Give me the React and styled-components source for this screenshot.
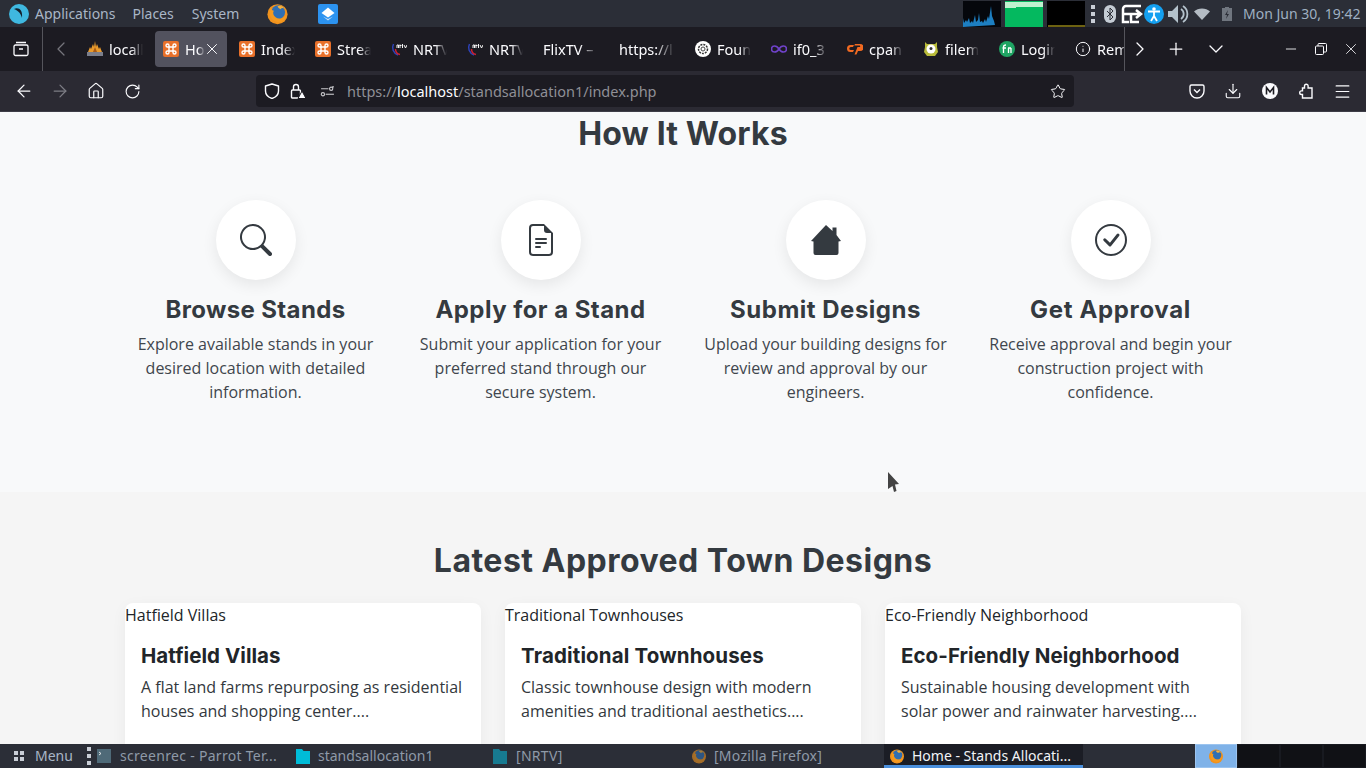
import React from 'react';
import styled, { createGlobalStyle } from 'styled-components';
import { ChevronLeft, ChevronRight, ChevronDown, Plus, Minus, X, ArrowLeft, ArrowRight, Home, RotateCw, Star, Download, Menu as MenuIcon, Info } from 'lucide-react';
import { BsSearch, BsFileEarmarkText, BsCheckCircle } from 'react-icons/bs';

const Global = createGlobalStyle`
  html, body { margin: 0; padding: 0; height: 768px; overflow: hidden; }
  * { box-sizing: border-box; }
  #root { height: 768px; }
`;

const Screen = styled.div`
  position: relative;
  width: 1366px; height: 768px;
  display: flex; flex-direction: column;
  overflow: hidden;
  font-family: "Noto Sans", "Open Sans", sans-serif;
`;

/* top system panel */
const TopPanel = styled.div`
  height: 27px; flex: none;
  background: #2b2e37;
  display: flex; align-items: center;
  padding-left: 9px;
  color: #a9b6c6;
  font-size: 14px;
`;
const PanelMenu = styled.span`
  margin-left: ${p => p.$gap}px;
`;
const PanelIcon = styled.span`
  display: inline-flex;
  margin-left: ${p => p.$gap}px;
`;
const Tray = styled.div`
  margin-left: auto;
  display: flex; align-items: center;
  height: 27px;
`;
const Graph = styled.svg`
  display: block;
  width: 38px; height: 26px;
  margin-right: ${p => p.$mr ?? 4}px;
`;
const TrayIcon = styled.span`
  display: inline-flex; align-items: center; justify-content: center;
  width: ${p => p.$w}px;
  margin-left: ${p => p.$ml ?? 0}px;
`;
const Clock = styled.span`
  margin-left: 11px;
  width: 123px;
  white-space: nowrap;
  color: #9fb0c2;
`;

/* tab strip */
const TabBar = styled.div`
  height: 44px; flex: none;
  background: #1c1b22;
  display: flex; align-items: center;
  color: #fbfbfe;
`;
const ViewButton = styled.div`
  flex: none;
  width: 43px; height: 44px;
  display: flex; align-items: center; justify-content: center;
  border-right: 1px solid #55555c;
`;
const ScrollButton = styled.div`
  flex: none;
  width: 36px; height: 44px;
  display: flex; align-items: center; justify-content: center;
  color: ${p => p.$dim ? '#75757c' : '#fbfbfe'};
`;
const Tabs = styled.div`
  flex: none;
  width: 1046px; height: 44px;
  display: flex; align-items: center;
  border-right: 1px solid #55555c;
  overflow: hidden;
`;
const Tab = styled.div`
  flex: none;
  width: 72px; height: 36px;
  margin-right: 4px;
  padding: 0 8px;
  border-radius: 4px;
  display: flex; align-items: center;
  gap: 6px;
  background: ${p => p.$active ? '#52525e' : 'transparent'};
`;
const TabLabel = styled.span`
  flex: 1; min-width: 0;
  white-space: nowrap;
  font-size: 14.5px;
  line-height: 20px;
  -webkit-mask-image: linear-gradient(to right, #000 65%, transparent 100%);
  mask-image: linear-gradient(to right, #000 65%, transparent 100%);
`;
const TabClose = styled.span`
  flex: none;
  display: inline-flex;
  margin-left: -6px;
`;
const Fav = styled.svg`
  flex: none; width: 16px; height: 16px; display: block;
`;
const BarButton = styled.div`
  flex: none;
  width: ${p => p.$w}px; height: 44px;
  display: flex; align-items: center; justify-content: center;
`;
const Spacer = styled.div`
  width: ${p => p.$w}px; flex: none;
`;

/* nav toolbar */
const NavBar = styled.div`
  height: 41px; flex: none;
  background: #2b2a33;
  border-bottom: 1px solid #3e3d47;
  display: flex; align-items: center;
  color: #fbfbfe;
`;
const NavButton = styled.div`
  flex: none;
  width: ${p => p.$w ?? 36}px; height: 32px;
  display: flex; align-items: center; justify-content: center;
  color: ${p => p.$dim ? '#7d7d85' : '#fbfbfe'};
`;
const UrlBar = styled.div`
  flex: none;
  width: 818px; height: 32px;
  background: #1c1b22;
  border-radius: 4px;
  display: flex; align-items: center;
  margin-right: 105px;
`;
const UrlIcon = styled.span`
  flex: none;
  display: inline-flex; align-items: center; justify-content: center;
  width: ${p => p.$w}px;
  margin-left: ${p => p.$ml ?? 0}px;
  margin-right: ${p => p.$mr ?? 0}px;
`;
const UrlText = styled.span`
  flex: 1;
  margin-left: 12px;
  font-size: 14.5px;
  color: #8f8f96;
  white-space: nowrap;
  b { font-weight: 400; color: #fbfbfe; }
`;

/* web page */
const Page = styled.main`
  flex: 1; min-height: 0;
  overflow: hidden;
  font-family: "Open Sans", sans-serif;
  color: #212529;
`;
const Steps = styled.section`
  height: 380px;
  padding-top: 1px;
  background: #f8f9fa;
`;
const Heading = styled.h2`
  margin: 0;
  text-align: center;
  font-family: Inter, sans-serif;
  font-weight: 650;
  font-size: 32px;
  line-height: 42px;
  letter-spacing: ${p => p.$track ?? 0}px;
  color: #343a40;
`;
const StepGrid = styled.div`
  width: 1140px;
  margin: 0 auto;
  padding-top: 45px;
  display: grid;
  grid-template-columns: repeat(4, 285px);
`;
const Step = styled.div`
  display: flex; flex-direction: column; align-items: center;
  padding: 0 16px;
  text-align: center;
`;
const Circle = styled.div`
  width: 80px; height: 80px;
  border-radius: 50%;
  background: #fff;
  box-shadow: 0 5px 15px rgba(0,0,0,.08);
  display: flex; align-items: center; justify-content: center;
  color: #343a40;
  font-size: 32px;
`;
const StepTitle = styled.h3`
  margin: 14px 0 0;
  white-space: nowrap;
  font-family: Inter, sans-serif;
  font-weight: 650;
  font-size: 24px;
  line-height: 32px;
  letter-spacing: ${p => p.$track ?? 0}px;
  color: #343a40;
`;
const StepText = styled.p`
  margin: 6px 0 0;
  font-size: 16px;
  line-height: 24px;
  color: #40464d;
`;
const Latest = styled.section`
  height: 252px;
  background: #f5f5f5;
  padding-top: 48px;
`;
const CardRow = styled.div`
  width: 1116px;
  margin: 21px auto 0;
  display: grid;
  grid-template-columns: repeat(3, 356px);
  gap: 24px;
`;
const Card = styled.article`
  height: 200px;
  background: #fff;
  border-radius: 8px;
  box-shadow: 0 4px 15px rgba(0,0,0,.05);
`;
const AltText = styled.div`
  height: 24px;
  font-size: 16px;
  line-height: 24px;
`;
const CardBody = styled.div`
  padding: 15px 16px;
`;
const CardTitle = styled.h4`
  margin: 0;
  font-family: Inter, sans-serif;
  font-weight: 650;
  font-size: 20.5px;
  line-height: 28px;
  letter-spacing: ${p => p.$track ?? 0}px;
  color: #212529;
`;
const CardText = styled.p`
  margin: 5px 0 0;
  font-size: 16px;
  line-height: 24px;
  color: #33383d;
`;

/* bottom panel */
const TaskBar = styled.div`
  height: 24px; flex: none;
  background: #2b2e37;
  display: flex; align-items: stretch;
  color: #8f9aa8;
  font-size: 14px;
`;
const StartMenu = styled.div`
  width: 85px;
  flex: none;
  display: flex; align-items: center;
  gap: 11px;
  padding: 0 0 1px 14px;
  color: #a9b6c6;
`;
const Handle = styled.svg`
  flex: none; width: 4px; height: 18px; align-self: center;
  margin-right: 6px;
`;
const Task = styled.div`
  flex: none;
  width: ${p => p.$w}px;
  display: flex; align-items: center;
  gap: ${p => p.$gap ?? 8}px;
  padding-left: ${p => p.$pl ?? 0}px;
  padding-bottom: 1px;
  white-space: nowrap;
  letter-spacing: ${p => p.$track ?? 0}px;
  ${p => p.$active && `
    background: #1b1d25;
    color: #f2f4f7;
    border-bottom: 3px solid #4a8fdc;
    padding-top: 2px;
    padding-bottom: 0;
  `}
`;
const DimIcon = styled.span`
  display: inline-flex;
  opacity: .6;
`;
const Workspaces = styled.div`
  margin-left: auto;
  display: flex;
`;
const Workspace = styled.div`
  width: ${p => p.$w}px;
  background: ${p => p.$active ? '#7fb2e8' : '#101115'};
  border: 1px solid ${p => p.$active ? '#9cc4ef' : '#181a20'};
  display: flex; align-items: center; justify-content: center;
`;
const Cursor = styled.svg`
  position: absolute;
  left: 887px; top: 472px;
  width: 13px; height: 21px;
`;

const Xampp = () => (
  <Fav viewBox="0 0 16 16">
    <rect width="16" height="16" rx="2" fill="#e8702a" />
    <path d="M6 6V4.500a1.500 1.500 0 1 0-1.500 1.500h7A1.500 1.500 0 1 0 10 4.500v7a1.500 1.500 0 1 0 1.500-1.500h-7A1.500 1.500 0 1 0 6 11.500z" stroke="#fff" strokeWidth="1.400" fill="none" />
  </Fav>
);
const Pma = () => (
  <Fav viewBox="0 0 16 16">
    <path d="M1 11L3 6l1 2 2-5 1 3 1-6 1 6 1-3 2 5 1-2 2 5z" fill="#e99a2c" />
    <path d="M6 11l2-5 2 5z" fill="#a85a16" />
    <rect x="0" y="11" width="16" height="4" fill="#7b7f8c" />
  </Fav>
);
const Nrtv = () => (
  <Fav viewBox="0 0 16 16">
    <path d="M2.500 3C.5 7 2 12 7 14" stroke="#2e42b8" strokeWidth="1.500" fill="none" />
    <path d="M4.500 8c0 3 2 5 4.500 5.500" stroke="#cc2030" strokeWidth="1.500" fill="none" />
    <rect x="5" y="2" width="11" height="6" rx="1" fill="#1c1b22" />
    <path d="M6 7V4h1.500v3M9 7V3.500M8.500 4.500h2M11.500 7V3M13 4l1.500 3L16 4" stroke="#f4f4f4" strokeWidth="1" fill="none" />
  </Fav>
);
const Found = () => (
  <Fav viewBox="0 0 16 16">
    <circle cx="8" cy="8" r="8" fill="#fff" />
    <circle cx="8" cy="8" r="4.500" fill="none" stroke="#333" strokeWidth="1.500" strokeDasharray="2 1" />
    <circle cx="8" cy="8" r="2" fill="none" stroke="#444" strokeWidth="1" />
  </Fav>
);
const Infinity8 = () => (
  <Fav viewBox="0 0 16 16">
    <path d="M8 8C6.500 5.500 5 5 3.500 5a3 3 0 0 0 0 6C5 11 6.500 10.500 8 8c1.500-2.500 3-3 4.500-3a3 3 0 0 1 0 6c-1.500 0-3-.5-4.500-3z" fill="none" stroke="#6f42c9" strokeWidth="1.600" />
  </Fav>
);
const Cpanel = () => (
  <Fav viewBox="0 0 16 16">
    <path d="M7 4H3.500a3.500 3.500 0 0 0 0 7H6l1-2H3.800a1.500 1.500 0 0 1 0-3H6z" fill="#f26a21" />
    <path d="M8 3h5a3 3 0 0 1 0 7h-2l-1.500 3.500H7.500L10.500 6h2.300a1 1 0 0 0 0-1.500H7.200z" fill="#f26a21" />
  </Fav>
);
const Filem = () => (
  <Fav viewBox="0 0 16 16">
    <path d="M2 1l2 2h8l2-2v5l1 5-3 4H4l-3-4 1-5z" fill="#b8bb3a" />
    <circle cx="8" cy="8" r="4.500" fill="#fff" />
    <circle cx="8" cy="7.500" r="1.500" fill="#333" />
  </Fav>
);
const Login = () => (
  <Fav viewBox="0 0 16 16">
    <circle cx="8" cy="8" r="8" fill="#1fa463" />
    <path d="M4.500 12V6c0-1.500 1-2 2.500-2M3.500 7H7M9.500 7v5M12 7v5M9 7h3" stroke="#fff" strokeWidth="1.300" fill="none" />
  </Fav>
);
const FoxIcon = ({ size = 16 }) => (
  <svg viewBox="0 0 16 16" width={size} height={size} style={{ display: 'block' }}>
    <circle cx="8" cy="8.500" r="7" fill="#f0921e" />
    <circle cx="8.500" cy="7" r="4.800" fill="#2f6fb4" />
    <path d="M3 4c-1 4 0 9 5 10 3 .5 6-2 6-5-1 2-3 3-5 2.500C6 11 4 8 5.500 6 4.500 6 3.500 5 3 4z" fill="#f59a1f" />
    <path d="M8 3c2-1 4 0 5 2-1-1-2-1-3 0-1-.5-1.500-1-2-2z" fill="#f8b13a" />
  </svg>
);
const HouseIcon = () => (
  <svg viewBox="0 0 30 30" width="30" height="30" fill="#343a40">
    <path d="M15 0l6.500 6V2.500h4V10l4.500 6-2.500.5V28a2 2 0 0 1-2 2h-21a2 2 0 0 1-2-2V16.500L0 16z" />
  </svg>
);
const Dots = () => (
  <Handle viewBox="0 0 4 18">
    <rect y="0" width="4" height="4" fill="#c9ced6" />
    <rect y="7" width="4" height="4" fill="#c9ced6" />
    <rect y="14" width="4" height="4" fill="#c9ced6" />
  </Handle>
);
const FolderIcon = ({ color }) => (
  <svg viewBox="0 0 14 16" width="14" height="16" style={{ display: 'block', flex: 'none' }}>
    <path d="M0 1h6l1.500 2H14v13H0z" fill={color} />
  </svg>
);

const tabs = [
  { icon: <Pma />, label: 'localh' },
  { icon: <Xampp />, label: 'Ho', active: true },
  { icon: <Xampp />, label: 'Index' },
  { icon: <Xampp />, label: 'Strea' },
  { icon: <Nrtv />, label: 'NRTV' },
  { icon: <Nrtv />, label: 'NRTV' },
  { label: 'FlixTV –' },
  { label: 'https://l' },
  { icon: <Found />, label: 'Foun' },
  { icon: <Infinity8 />, label: 'if0_3' },
  { icon: <Cpanel />, label: 'cpane' },
  { icon: <Filem />, label: 'filem' },
  { icon: <Login />, label: 'Login' },
  { icon: <Info size={16} strokeWidth={1.500} />, label: 'Rem' },
];

const steps = [
  { icon: <BsSearch />, title: 'Browse Stands', track: 0.35, text: 'Explore available stands in your desired location with detailed information.' },
  { icon: <BsFileEarmarkText />, title: 'Apply for a Stand', track: 0.45, text: 'Submit your application for your preferred stand through our secure system.' },
  { icon: <HouseIcon />, title: 'Submit Designs', track: 0.5, text: 'Upload your building designs for review and approval by our engineers.' },
  { icon: <BsCheckCircle />, title: 'Get Approval', track: 0.65, text: 'Receive approval and begin your construction project with confidence.' },
];

const cards = [
  { title: 'Hatfield Villas', track: 0.05, text: 'A flat land farms repurposing as residential houses and shopping center....' },
  { title: 'Traditional Townhouses', track: 0.15, text: 'Classic townhouse design with modern amenities and traditional aesthetics....' },
  { title: 'Eco-Friendly Neighborhood', track: 0.05, text: 'Sustainable housing development with solar power and rainwater harvesting....' },
];

export default function App() {
  return (
    <Screen>
      <Global />
      <TopPanel>
        <svg viewBox="0 0 20 20" width="20" height="20">
          <circle cx="10" cy="10" r="10" fill="#3fb8e0" />
          <path d="M5 5c4-2 9 0 8 9-1-4-3-7-8-9z" fill="#14202c" />
        </svg>
        <PanelMenu $gap={6}>Applications</PanelMenu>
        <PanelMenu $gap={17}>Places</PanelMenu>
        <PanelMenu $gap={18}>System</PanelMenu>
        <PanelIcon $gap={27}><FoxIcon size={23} /></PanelIcon>
        <PanelIcon $gap={29}>
          <svg viewBox="0 0 20 20" width="20" height="20">
            <rect width="20" height="20" rx="2" fill="#2c93f0" />
            <path d="M10 3.500l6.500 5.500-6.500 4.500L3.500 9z" fill="#fff" />
            <path d="M5 12.500l5 4 5-4-5 2.500z" fill="#cfe2f5" />
          </svg>
        </PanelIcon>
        <Tray>
          <Graph viewBox="0 0 38 26">
            <rect width="38" height="26" fill="#05070c" />
            <path d="M0 26V17l1 5 2-3 1 2 2-4 1 5 2-2 1 2 2-8 1 7 2-2 1-7 1 9 2-1 1 2 2-4 1 3 2-6 1 3 2-13 1 10 2 5 1 4z" fill="#1d7fc2" />
          </Graph>
          <Graph viewBox="0 0 38 26">
            <rect width="38" height="26" fill="#04b95f" />
            <path d="M0 1h38v5H11v1H0z" fill="#bff2cf" />
          </Graph>
          <Graph viewBox="0 0 38 26" $mr={6}>
            <rect width="38" height="26" fill="#000" />
            <rect x="1" y="24.500" width="37" height="1" fill="#d9c322" />
          </Graph>
          <Dots />
          <TrayIcon $w={12} $ml={3}>
            <svg viewBox="0 0 12 18" width="12" height="18">
              <rect width="12" height="18" rx="6" fill="#c4ccd4" />
              <path d="M3 6l6 6-3 3V3l3 3-6 6" stroke="#2b2e37" strokeWidth="1" fill="none" />
            </svg>
          </TrayIcon>
          <TrayIcon $w={22} $ml={5}>
            <svg viewBox="0 0 22 22" width="22" height="22">
              <path d="M20 3H5a3 3 0 0 0-3 3v13h6M11 11h8M15 7l5 4-5 4M3 11h7v8h8" fill="none" stroke="#fff" strokeWidth="2.500" />
            </svg>
          </TrayIcon>
          <TrayIcon $w={20} $ml={1}>
            <svg viewBox="0 0 20 20" width="20" height="20">
              <circle cx="10" cy="10" r="10" fill="#14a0f0" />
              <circle cx="10" cy="5" r="1.800" fill="#fff" />
              <path d="M4 7.500h12M10 8v5M10 12l-3 5M10 12l3 5" stroke="#fff" strokeWidth="1.800" fill="none" />
            </svg>
          </TrayIcon>
          <TrayIcon $w={22} $ml={4}>
            <svg viewBox="0 0 22 20" width="24" height="22">
              <path d="M0 7h4l6-6v18l-6-6H0z" fill="#b4c2cc" />
              <path d="M13 5a6 6 0 0 1 0 10M15 2a9.500 9.500 0 0 1 0 16" stroke="#b4c2cc" strokeWidth="1.800" fill="none" />
            </svg>
          </TrayIcon>
          <TrayIcon $w={16} $ml={4}>
            <svg viewBox="0 0 16 12" width="16" height="12">
              <path d="M0 3.500C4-.5 12-.5 16 3.500L8 12z" fill="#b4bcc4" />
            </svg>
          </TrayIcon>
          <TrayIcon $w={10} $ml={12}>
            <svg viewBox="0 0 10 14" width="10" height="14">
              <path d="M3 0h4v1h3v13H0V1h3z" fill="#70767f" />
              <path d="M6 3L3 8h2l-1 4 3-5H5z" fill="#2b2e37" />
            </svg>
          </TrayIcon>
          <Clock>Mon Jun 30, 19:42</Clock>
        </Tray>
      </TopPanel>

      <TabBar>
        <ViewButton>
          <svg viewBox="0 0 16 16" width="16" height="16" fill="none" stroke="#fbfbfe" strokeWidth="1.300">
            <rect x="1" y="4" width="14" height="10.500" rx="1.500" />
            <path d="M3 1.500h10M6 8h4" />
          </svg>
        </ViewButton>
        <ScrollButton $dim><ChevronLeft size={24} strokeWidth={1.300} /></ScrollButton>
        <Tabs>
          {tabs.map((t, i) => (
            <Tab key={i} $active={t.active}>
              {t.icon}
              <TabLabel>{t.label}</TabLabel>
              {t.active && <TabClose><X size={18} strokeWidth={1.300} style={{ margin: '0 -2px' }} /></TabClose>}
            </Tab>
          ))}
        </Tabs>
        <BarButton $w={30}><ChevronRight size={24} strokeWidth={1.300} /></BarButton>
        <BarButton $w={42}><Plus size={20} strokeWidth={1.500} /></BarButton>
        <BarButton $w={38}><ChevronDown size={24} strokeWidth={1.300} /></BarButton>
        <Spacer $w={41} />
        <BarButton $w={30}><Minus size={16} strokeWidth={1.300} /></BarButton>
        <BarButton $w={30}>
          <svg viewBox="0 0 12 12" width="12" height="12" fill="none" stroke="#fbfbfe" strokeWidth="1">
            <rect x=".5" y="3" width="8" height="8.500" rx="1" />
            <path d="M3 3V1.500a1 1 0 0 1 1-1h6.500a1 1 0 0 1 1 1V8a1 1 0 0 1-1 1H9" />
          </svg>
        </BarButton>
        <BarButton $w={30}><X size={18} strokeWidth={1.100} /></BarButton>
      </TabBar>

      <NavBar>
        <Spacer $w={6} />
        <NavButton><ArrowLeft size={20} strokeWidth={1.500} /></NavButton>
        <NavButton $dim><ArrowRight size={20} strokeWidth={1.500} /></NavButton>
        <NavButton><Home size={18} strokeWidth={1.600} /></NavButton>
        <NavButton><RotateCw size={17} strokeWidth={1.600} /></NavButton>
        <Spacer $w={106} />
        <UrlBar>
          <UrlIcon $w={16} $ml={8}>
            <svg viewBox="0 0 16 16" width="16" height="16" fill="none" stroke="#fbfbfe" strokeWidth="1.400" strokeLinejoin="round">
              <path d="M8 1l6.500 2v5c0 4-3.500 6.500-6.500 7.500C5 14.500 1.500 12 1.500 8V3z" />
            </svg>
          </UrlIcon>
          <UrlIcon $w={16} $ml={10}>
            <svg viewBox="0 0 16 16" width="16" height="16" fill="none" stroke="#fbfbfe" strokeWidth="1.400">
              <rect x="1.500" y="7" width="9" height="8" rx="1" />
              <path d="M3.500 7V4a2.500 2.500 0 0 1 5 0v3" />
              <path d="M12 8l-4 7.500h8z" fill="#fbfbfe" stroke="#1c1b22" strokeWidth="1" />
            </svg>
          </UrlIcon>
          <UrlIcon $w={16} $ml={13}>
            <svg viewBox="0 0 16 12" width="15" height="11" fill="none" stroke="#c8c8cc" strokeWidth="1.200">
              <path d="M1 3h8M13 1h2" /><circle cx="12" cy="3" r="1.800" />
              <circle cx="3" cy="9" r="1.800" /><path d="M6 9h9" />
            </svg>
          </UrlIcon>
          <UrlText>https://<b>localhost</b>/standsallocation1/index.php</UrlText>
          <UrlIcon $w={16} $mr={8}><Star size={17} strokeWidth={1.500} /></UrlIcon>
        </UrlBar>
        <NavButton $w={36}>
          <svg viewBox="0 0 16 16" width="16" height="16" fill="none" stroke="#fbfbfe" strokeWidth="1.400">
            <path d="M2.500 2h11A1.500 1.500 0 0 1 15 3.500V8a7 7 0 0 1-14 0V3.500A1.500 1.500 0 0 1 2.500 2z" />
            <path d="M5 6.500L8 9.500l3-3" />
          </svg>
        </NavButton>
        <NavButton $w={36}><Download size={18} strokeWidth={1.500} /></NavButton>
        <NavButton $w={37}>
          <svg viewBox="0 0 16 16" width="16" height="16">
            <circle cx="8" cy="8" r="8" fill="#fbfbfe" />
            <path d="M4.500 11.500v-7L8 9l3.500-4.500v7" stroke="#1c1b22" strokeWidth="1.600" fill="none" />
          </svg>
        </NavButton>
        <NavButton $w={36}>
          <svg viewBox="0 0 16 16" width="16" height="16" fill="none" stroke="#fbfbfe" strokeWidth="1.400">
            <path d="M6.500 3a1.800 1.800 0 0 1 3.600 0V5H14v10H4.500v-3.500H3.500a1.800 1.800 0 0 1 0-3.600h1V5h2z" />
          </svg>
        </NavButton>
        <NavButton $w={36}><MenuIcon size={19} strokeWidth={1.500} /></NavButton>
      </NavBar>

      <Page>
        <Steps>
          <Heading $track={0.15}>How It Works</Heading>
          <StepGrid>
            {steps.map(s => (
              <Step key={s.title}>
                <Circle>{s.icon}</Circle>
                <StepTitle $track={s.track}>{s.title}</StepTitle>
                <StepText>{s.text}</StepText>
              </Step>
            ))}
          </StepGrid>
        </Steps>
        <Latest>
          <Heading $track={0.48}>Latest Approved Town Designs</Heading>
          <CardRow>
            {cards.map(c => (
              <Card key={c.title}>
                <AltText>{c.title}</AltText>
                <CardBody>
                  <CardTitle $track={c.track}>{c.title}</CardTitle>
                  <CardText>{c.text}</CardText>
                </CardBody>
              </Card>
            ))}
          </CardRow>
        </Latest>
      </Page>

      <TaskBar>
        <StartMenu>
          <svg viewBox="0 0 10 10" width="10" height="10">
            <rect width="4" height="4" fill="#c9ced6" /><rect x="6" width="4" height="4" fill="#c9ced6" />
            <rect y="6" width="4" height="4" fill="#c9ced6" /><rect x="6" y="6" width="4" height="4" fill="#c9ced6" />
          </svg>
          Menu
        </StartMenu>
        <Spacer $w={2} />
        <Dots />
        <Task $w={199} $gap={9} $track={0.3}>
          <svg viewBox="0 0 14 14" width="14" height="14" style={{ flex: 'none' }}>
            <rect width="14" height="14" fill="#4f6a78" />
            <path d="M2 3l2 1.500L2 6" stroke="#fff" fill="none" strokeWidth=".8" />
          </svg>
          screenrec - Parrot Ter...
        </Task>
        <Task $w={197} $gap={8}><FolderIcon color="#00bcd8" />standsallocation1</Task>
        <Task $w={198} $gap={9} $track={0.3}><FolderIcon color="#177a90" />[NRTV]</Task>
        <Task $w={193} $gap={7} $track={0.25}><DimIcon><FoxIcon /></DimIcon>[Mozilla Firefox]</Task>
        <Task $w={199} $active $pl={5} $gap={7}><FoxIcon />Home - Stands Allocati...</Task>
        <Workspaces>
          <Workspace $w={42} $active><FoxIcon /></Workspace>
          <Workspace $w={43} />
          <Workspace $w={43} />
          <Workspace $w={43} />
        </Workspaces>
      </TaskBar>

      <Cursor viewBox="0 0 13 21">
        <path d="M1 0l11 12-4 .5L9.500 19 7 20l-1.500-6L1 17z" fill="#444" />
      </Cursor>
    </Screen>
  );
}
